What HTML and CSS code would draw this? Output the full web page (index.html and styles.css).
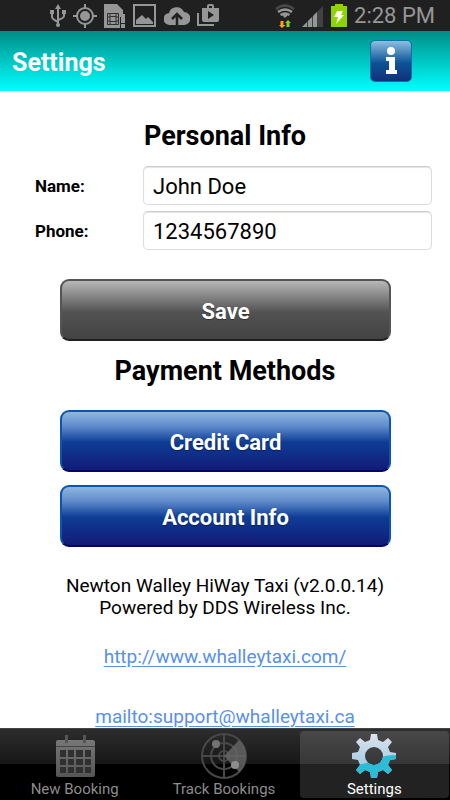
FILE: index.html
```html
<!doctype html>
<html lang="en">

<head>
  <meta charset="utf-8">
  <meta name="viewport" content="width=device-width, initial-scale=1">
  <title>Settings</title>
  <link rel="stylesheet" href="styles.css">
</head>

<body>
  <div class="status-bar">
    <div class="status-icons">
      <svg width="16" height="24" viewBox="0 0 16 24" fill="none" stroke="#969696" stroke-width="2">
        <path d="M8 3v18M2 8v5q0 2 6 5M14 8v4q0 2-6 4" />
        <path d="M8 0l3 5H5zM0 6h4v4H0zM12 6h4v4h-4z" fill="#969696" stroke="none" />
        <circle cx="8" cy="21" r="2" fill="#969696" stroke="none" />
      </svg>
      <svg width="24" height="24" viewBox="0 0 24 24" fill="none" stroke="#969696" stroke-width="2">
        <circle cx="12" cy="12" r="8" />
        <circle cx="12" cy="12" r="5" fill="#969696" stroke="none" />
        <path d="M12 0v4M12 20v4M0 12h4M20 12h4" />
      </svg>
      <svg width="22" height="24" viewBox="0 0 22 24">
        <path d="M0 0h13l6 6v7h-3v11H0z" fill="#969696" />
        <path d="M3.500 9.500h11v11h-11zM6 9.500v11M12 9.500v11M3.500 13h2.500M3.500 17h2.500M12 13h2.500M12 17h2.500M6 12.500h6M6 17.500h6" fill="none" stroke="#303030" />
        <path d="M17 10h4v9h-4zM17 20h4v4h-4z" fill="#969696" />
      </svg>
      <svg width="24" height="24" viewBox="0 0 24 24">
        <path d="M1 1h21v21H1z" fill="none" stroke="#969696" stroke-width="2" />
        <path d="M3 20v-4l6-5 4 4 2-2 5 5v2z" fill="#969696" />
      </svg>
      <svg width="26" height="24" viewBox="0 0 26 24">
        <path d="M6 21a6 6 0 0 1-1-12 8 8 0 0 1 15-1 6.500 6.500 0 0 1 0 13z" fill="#969696" />
        <path d="M13 21v-9M8 15l5-5 5 5" fill="none" stroke="#202020" stroke-width="2.500" />
      </svg>
      <svg width="22" height="24" viewBox="0 0 22 24">
        <path d="M5 4h5V2q0-2 2-2h3q2 0 2 2v2h5v12q0 2-2 2H7q-2 0-2-2zM12 4h3V2h-3zM11 7v8l6-4z" fill="#969696" fill-rule="evenodd" />
        <path d="M1 9v12h16" fill="none" stroke="#969696" stroke-width="2" />
      </svg>
    </div>
    <div class="status-system">
      <svg width="20" height="24" viewBox="0 0 20 24" fill="none" stroke-width="2.500">
        <path d="M1 5q9-7 18 0" stroke="#4a4a4a" />
        <path d="M3 8q7-5 14 0M5.500 11q4.500-3 9 0" stroke="#969696" />
        <path d="M7 11q3-2 6 0l-3 3z" fill="#969696" />
        <path d="M5.500 17h3v4h2l-3.500 3-3-3h1.500z" fill="#ff9c2b" />
        <path d="M11.500 23v-4H10l3-3 3 3h-1.500v4z" fill="#86d219" />
      </svg>
      <svg width="22" height="24" viewBox="0 0 22 24">
        <path d="M0 23L21 2v21z" fill="#424242" />
        <path d="M0 23l5-5v5zM6 17l4-4v10H6zM11 12l4-4v15h-4z" fill="#969696" />
      </svg>
      <svg width="16" height="24" viewBox="0 0 16 24">
        <path d="M4 0h8v2h4v21H0V2h4z" fill="#8fd400" />
        <path d="M6 7h6l-2 4h3L5 20l2-7H3z" fill="#fff" />
      </svg>
      <span class="clock">2:28 PM</span>
    </div>
  </div>

  <header class="header">
    <h1>Settings</h1>
    <button class="info-btn" aria-label="Information">
      <svg width="20" height="30" viewBox="0 0 20 30" fill="#fff">
        <circle cx="10" cy="5" r="4" />
        <path d="M5 11h9v13h2v4H5v-4h3v-9H5z" />
      </svg>
    </button>
  </header>

  <main class="content">
    <h2>Personal Info</h2>
    <form class="personal-form">
      <label for="name">Name:</label>
      <input id="name" type="text" value="John Doe">
      <label for="phone">Phone:</label>
      <input id="phone" type="tel" value="1234567890">
    </form>
    <div class="button-group">
      <button class="btn btn-save">Save</button>
    </div>
    <h2>Payment Methods</h2>
    <div class="button-group">
      <button class="btn">Credit Card</button>
      <button class="btn">Account Info</button>
    </div>
    <div class="about">
      <p>Newton Walley HiWay Taxi (v2.0.0.14)<br>Powered by DDS Wireless Inc.</p>
      <a href="http://www.whalleytaxi.com/">http://www.whalleytaxi.com/</a>
      <a href="mailto:support@whalleytaxi.ca">mailto:support@whalleytaxi.ca</a>
    </div>
  </main>

  <nav class="tab-bar">
    <button class="tab">
      <svg width="44" height="46" viewBox="0 0 44 46">
        <defs>
          <linearGradient id="calendar-fill" x2="0" y2="1">
            <stop stop-color="#777" />
            <stop offset="1" stop-color="#555" />
          </linearGradient>
        </defs>
        <rect x="3" y="7" width="39" height="37" rx="2" fill="url(#calendar-fill)" />
        <path d="M3 13.500h39" stroke="#444" />
        <path d="M13.500 2v8M31.500 2v8" stroke="#555" stroke-width="3" />
        <path d="M7 17h6v7H7zM15 17h6v7h-6zM23 17h7v7h-7zM32 17h6v7h-6zM7 26h6v6H7zM15 26h6v6h-6zM23 26h7v6h-7zM32 26h6v6h-6zM7 34h6v6H7zM15 34h6v6h-6zM23 34h7v6h-7zM32 34h6v6h-6z" fill="#303030" />
      </svg>
      <span>New Booking</span>
    </button>
    <button class="tab">
      <svg width="46" height="46" viewBox="0 0 46 46" fill="none" stroke="#484848" stroke-width="2">
        <circle cx="23" cy="23" r="22" />
        <circle cx="23" cy="23" r="13" />
        <circle cx="23" cy="23" r="5" />
        <path d="M23 1v44M1 23h44" />
        <path d="M23 23L38 7a22 22 0 0 1 0 32z" fill="#686868" stroke="none" opacity=".8" />
        <circle cx="15" cy="11" r="4" fill="#737373" stroke="none" />
        <circle cx="34" cy="32" r="4" fill="#8c8c8c" stroke="none" />
      </svg>
      <span>Track Bookings</span>
    </button>
    <button class="tab active">
      <svg width="46" height="46" viewBox="0 0 46 46">
        <defs>
          <linearGradient id="gear-top" x2="0" y2="1">
            <stop stop-color="#dce3ee" />
            <stop offset="1" stop-color="#8fc3dc" />
          </linearGradient>
          <clipPath id="gear-lower">
            <path d="M0 32q14 0 23-5t23-5v24H0z" />
          </clipPath>
          <path id="gear" fill-rule="evenodd" d="M20 1h6l1 6 5 2 5-4 4 4-4 5 2 5 6 1v6l-6 1-2 5 4 5-4 4-5-4-5 2-1 6h-6l-1-6-5-2-5 4-4-4 4-5-2-5-6-1v-6l6-1 2-5-4-5 4-4 5 4 5-2zM23 14a9 9 0 1 0 0 18 9 9 0 0 0 0-18z" />
        </defs>
        <use href="#gear" fill="url(#gear-top)" />
        <use href="#gear" fill="#2cbcd5" clip-path="url(#gear-lower)" />
      </svg>
      <span>Settings</span>
    </button>
  </nav>
</body>

</html>
```
FILE: styles.css
```css
* {
  box-sizing: border-box;
}

body {
  margin: 0;
  height: 100vh;
  display: flex;
  flex-direction: column;
  overflow: hidden;
  background: #fff;
  color: #000;
  font-family: Roboto, sans-serif;
}

button,
input {
  font-family: inherit;
}

svg {
  display: block;
  flex: none;
}

.status-bar {
  display: flex;
  flex: none;
  justify-content: space-between;
  align-items: center;
  height: 31px;
  padding: 0 15px 0 50px;
  background: #202020;
}

.status-icons,
.status-system {
  display: flex;
  align-items: center;
  gap: 7px;
}

.clock {
  color: #969696;
  font-size: 22px;
  line-height: 30px;
  white-space: nowrap;
}

.header {
  display: flex;
  flex: none;
  justify-content: space-between;
  align-items: center;
  height: 60px;
  padding: 0 38px 0 12px;
  background: linear-gradient(#008d86, #0ff);
}

.header h1 {
  margin: 0;
  padding-top: 3px;
  color: #fff;
  font-size: 25px;
  line-height: 32px;
}

.info-btn {
  display: flex;
  align-items: center;
  justify-content: center;
  width: 42px;
  height: 42px;
  padding: 0;
  border: 1px solid #0874ac;
  border-radius: 5px;
  background: linear-gradient(#8dbfe0, #0c5396 55%, #12307d);
}

.content {
  flex: 1;
  min-height: 0;
  padding-top: 29px;
  overflow: hidden;
}

h2 {
  margin: 0;
  font-size: 27px;
  line-height: 32px;
  text-align: center;
}

.personal-form {
  display: grid;
  grid-template-columns: 108px 1fr;
  gap: 6px 0;
  align-items: center;
  padding: 14px 18px 29px 35px;
}

.personal-form label {
  font-size: 17px;
  font-weight: 700;
}

.personal-form input {
  width: 100%;
  min-width: 0;
  height: 39px;
  padding: 2px 9px 0;
  border: 1px solid #dcdcdc;
  border-top-color: #ccc;
  border-radius: 5px;
  background: #fff;
  box-shadow: inset 0 1px 1px #e4e4e4;
  color: #000;
  font-size: 22px;
}

.button-group {
  display: flex;
  flex-direction: column;
  gap: 13px;
  padding: 0 59px 0 60px;
}

.button-group + h2 {
  padding: 14px 0 23px;
}

.btn {
  height: 62px;
  padding: 2px 0 0;
  border: 2px solid #0c55ae;
  border-bottom-color: #04046c;
  border-radius: 9px;
  background: linear-gradient(#8fb7e0, #5e8aca 25%, #0e3d96 52%, #121b76);
  color: #fff;
  font-size: 22px;
  font-weight: 700;
  text-shadow: 0 1px 1px rgb(0 0 0 / 0.4);
}

.btn-save {
  border-color: #555;
  border-bottom-color: #202020;
  background: linear-gradient(#b8b8b8, #888 25%, #525252 54%, #434343);
}

.about {
  display: flex;
  flex-direction: column;
  align-items: center;
  padding-top: 28px;
  font-size: 19px;
  line-height: 22px;
  text-align: center;
}

.about p {
  margin: 0 0 27px;
}

.about a {
  margin-bottom: 38px;
  color: #5790ed;
  text-underline-offset: 3px;
}

.tab-bar {
  display: flex;
  flex: none;
  height: 72px;
  border-top: 1px solid #444;
  background: linear-gradient(#2d2d2d, #161616 50%, #000 50%);
}

.tab {
  display: flex;
  flex: 1;
  flex-direction: column;
  align-items: center;
  padding: 4px 0 0;
  border: none;
  background: none;
  color: #8c8c8c;
  font-size: 15px;
  line-height: 21px;
  white-space: nowrap;
}

.tab.active {
  margin: 2px 1px;
  padding-top: 2px;
  border-radius: 4px;
  background: linear-gradient(#484848, #373737 49%, #222 49%);
  color: #fff;
}
```
